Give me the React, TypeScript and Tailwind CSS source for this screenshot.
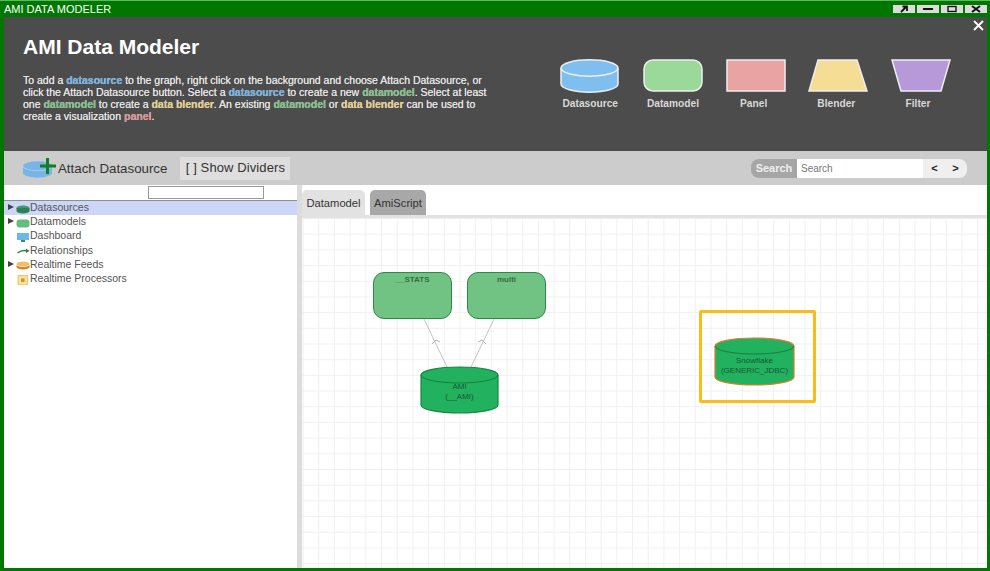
import type { ReactNode } from "react";

function Hl({ color, children }: { color: string; children: ReactNode }) {
  return <span className={`font-bold ${color}`}>{children}</span>;
}

function WinButton({ children }: { children: ReactNode }) {
  return (
    <div className="w-[22px] h-[8px] bg-[#dcdcdc] flex items-center justify-center">
      <svg width="12" height="8" viewBox="0 0 12 8">
        {children}
      </svg>
    </div>
  );
}

function Legend({ label, labelClass, children }: { label: string; labelClass?: string; children: ReactNode }) {
  return (
    <div className="w-[60px] flex flex-col items-center">
      <svg width="60" height="34" viewBox="0 0 60 34">
        {children}
      </svg>
      <span className={`mt-[4px] text-[10.2px] leading-[14px] font-bold text-[#d8d8d8] whitespace-nowrap ${labelClass ?? ""}`}>
        {label}
      </span>
    </div>
  );
}

function Cylinder({
  width,
  height,
  stroke,
  textTop,
  children,
}: {
  width: number;
  height: number;
  stroke: string;
  textTop: number;
  children: ReactNode;
}) {
  const rx = width / 2 - 1;
  const ry = 8;
  return (
    <div className="relative" style={{ width, height }}>
      <svg width={width} height={height} className="absolute inset-0">
        <path
          d={`M1 ${ry + 1} A${rx} ${ry} 0 0 1 ${width - 1} ${ry + 1} V${height - ry - 1} A${rx} ${ry} 0 0 1 1 ${height - ry - 1} Z`}
          fill="#22b15f"
          stroke={stroke}
          strokeWidth="1.2"
        />
        <path d={`M1 ${ry + 1} A${rx} ${ry} 0 0 0 ${width - 1} ${ry + 1}`} fill="none" stroke="#12743a" strokeWidth="0.8" />
      </svg>
      <div className="absolute inset-x-0 text-center text-[8px] leading-[9.5px] text-[#1c5535] whitespace-nowrap" style={{ top: textTop }}>
        {children}
      </div>
    </div>
  );
}

function TreeRow({
  label,
  arrow,
  active,
  children,
}: {
  label: string;
  arrow?: boolean;
  active?: boolean;
  children: ReactNode;
}) {
  return (
    <div className={`h-[14.2px] flex items-center pl-[4px] ${active ? "bg-[#ccd6f6]" : ""}`}>
      <span className="w-[8px] h-[8px] flex items-start">
        {arrow && (
          <svg width="6" height="6" viewBox="0 0 6 6">
            <path d="M0 0 L6 3 L0 6 Z" fill="#444" />
          </svg>
        )}
      </span>
      <svg width="14" height="10" viewBox="0 0 14 10" className="mt-[1px] shrink-0">
        {children}
      </svg>
      <span className="text-[10.5px] leading-[13px] mb-[1px] text-[#555] whitespace-nowrap">{label}</span>
    </div>
  );
}

export default function App() {
  return (
    <div className="w-[990px] h-[571px] overflow-hidden bg-[#007700] font-['Liberation_Sans',Arial,sans-serif] flex flex-col">
      <div className="h-px bg-[#63b563]" />
      {/* title bar */}
      <div className="h-[16px] flex items-center justify-between pl-[4px] pr-[3px]">
        <span className="text-[11px] leading-[16px] text-white">AMI DATA MODELER</span>
        <div className="flex gap-[2px] pb-[1px]">
          <WinButton>
            <path d="M3 7 L8 2 M4.5 1.5 H9 V6" stroke="#111" strokeWidth="1.8" fill="none" />
          </WinButton>
          <WinButton>
            <path d="M1 4 H11" stroke="#111" strokeWidth="2" />
          </WinButton>
          <WinButton>
            <rect x="2" y="1.5" width="8" height="5" stroke="#111" strokeWidth="1.4" fill="none" />
          </WinButton>
          <WinButton>
            <path d="M2 1 L10 7 M10 1 L2 7" stroke="#111" strokeWidth="2" />
          </WinButton>
        </div>
      </div>

      <div className="flex-1 min-h-0 ml-[4px] mr-[3px] mb-[3px] flex flex-col bg-white">
        {/* help banner */}
        <div className="relative h-[134px] shrink-0 bg-[#4c4c4c] flex justify-between pl-[19px] pr-[36px]">
          <div className="w-[480px] pt-[17px]">
            <h1 className="text-[21px] leading-[25px] font-bold text-white">AMI Data Modeler</h1>
            <p className="mt-[15px] text-[10.5px] leading-[12px] text-[#e4e4e4] whitespace-nowrap [text-shadow:0_0_0.5px_#e4e4e4]">
              To add a <Hl color="text-[#6fb0e4]">datasource</Hl> to the graph, right click on the background and choose Attach Datasource, or
              <br />
              click the Attach Datasource button. Select a <Hl color="text-[#6fb0e4]">datasource</Hl> to create a new <Hl color="text-[#7fbf85]">datamodel</Hl>. Select at least
              <br />
              one <Hl color="text-[#7fbf85]">datamodel</Hl> to create a <Hl color="text-[#e3cd87]">data blender</Hl>. An existing <Hl color="text-[#7fbf85]">datamodel</Hl> or <Hl color="text-[#e3cd87]">data blender</Hl> can be used to
              <br />
              create a visualization <Hl color="text-[#d98f8f]">panel</Hl>.
            </p>
          </div>
          <div className="flex gap-[22.7px] pt-[42px]">
            <Legend label="Datasource">
              <path d="M1 9 A28 8 0 0 1 58 9 V25 A28 8 0 0 1 1 25 Z" fill="#7fbff0" stroke="#eee" strokeWidth="1.5" />
              <path d="M1 9 A28 8 0 0 0 58 9" fill="none" stroke="#eee" strokeWidth="1.5" />
            </Legend>
            <Legend label="Datamodel">
              <rect x="1" y="1" width="58" height="31" rx="9" fill="#9bd99b" stroke="#eee" strokeWidth="1.5" />
            </Legend>
            <Legend label="Panel" labelClass="mr-[4px]">
              <rect x="1" y="1" width="58" height="31" fill="#e9a3a3" stroke="#eee" strokeWidth="1.5" />
            </Legend>
            <Legend label="Blender" labelClass="mr-[4px]">
              <path d="M10 1 H49 L59 32 H1 Z" fill="#f6dd95" stroke="#eee" strokeWidth="1.5" />
            </Legend>
            <Legend label="Filter" labelClass="mr-[6px]">
              <path d="M1 1 H59 L50 32 H10 Z" fill="#b799d9" stroke="#eee" strokeWidth="1.5" />
            </Legend>
          </div>
          <svg width="11" height="11" viewBox="0 0 11 11" className="absolute right-[3px] top-[3px]">
            <path d="M1 1 L10 10 M10 1 L1 10" stroke="#fff" strokeWidth="1.8" />
          </svg>
        </div>

        {/* toolbar */}
        <div className="h-[34px] shrink-0 bg-[#cccccc] flex items-center pl-[19px] pr-[20px]">
          <svg width="35" height="21" viewBox="0 0 35 21" className="shrink-0 mb-[1px]">
            <path d="M0 9 A14 4.5 0 0 1 29 9 V16 A14 4.5 0 0 1 0 16 Z" fill="#78b4e6" />
            <path d="M0 9 A14 4.5 0 0 0 29 9" fill="none" stroke="#a4cdef" strokeWidth="1" />
            <path d="M24.5 1 V17 M17 9 H33" stroke="#0f7f1f" strokeWidth="3" />
          </svg>
          <span className="text-[13.3px] leading-[16px] mt-px text-[#333] whitespace-nowrap">Attach Datasource</span>
          <div className="ml-[13px] h-[23px] w-[110px] bg-[#dedede] flex items-center justify-center text-[13px] text-[#333] whitespace-nowrap tracking-[0.1px]">
            [ ] Show Dividers
          </div>
          <div className="ml-auto flex items-center h-[19px]">
            <div className="w-[46px] h-full rounded-l-[8px] bg-[#a6a6a6] flex items-center justify-center text-[11px] font-bold text-[#eeeeee]">
              Search
            </div>
            <div className="w-[126px] h-full bg-white flex items-center pl-[4px] text-[10px] text-[#777]">Search</div>
            <div className="w-[44px] h-full rounded-r-[8px] bg-[#efefef] flex items-center justify-around px-[1px] text-[11px] font-bold text-[#222]">
              <span>&lt;</span>
              <span>&gt;</span>
            </div>
          </div>
        </div>

        <div className="flex-1 min-h-0 flex">
          {/* tree */}
          <div className="w-[293px] shrink-0 flex flex-col">
            <div className="h-[15px] shrink-0 pl-[144px] pt-px">
              <div className="w-[116px] h-[13px] border border-[#999] bg-white" />
            </div>
            <div className="h-[1px] bg-[#8f8f8f]" />
            <TreeRow label="Datasources" arrow active>
              <ellipse cx="7" cy="4" rx="6.5" ry="2.5" fill="#3f9b6d" />
              <path d="M0.5 4 V7 A6.5 2.5 0 0 0 13.5 7 V4 Z" fill="#2d7f56" />
            </TreeRow>
            <TreeRow label="Datamodels" arrow>
              <rect x="0.5" y="1.5" width="13" height="8" rx="3" fill="#63bd7e" />
            </TreeRow>
            <TreeRow label="Dashboard">
              <rect x="1" y="1" width="12" height="7" fill="#6cb9e6" />
              <rect x="5" y="8" width="4" height="2" fill="#3a7fb0" />
            </TreeRow>
            <TreeRow label="Relationships">
              <path d="M1.5 7 Q6 3.5 12 5" stroke="#2f7f52" strokeWidth="1.4" fill="none" />
              <path d="M10 2.5 L13.5 5 L10 7 Z" fill="#2f7f52" />
            </TreeRow>
            <TreeRow label="Realtime Feeds" arrow>
              <ellipse cx="7" cy="4" rx="6.5" ry="2.5" fill="#f0c060" />
              <path d="M0.5 4.5 A6.5 2.5 0 0 0 13.5 4.5 V7 A6.5 2.5 0 0 1 0.5 7 Z" fill="#e07f30" />
            </TreeRow>
            <TreeRow label="Realtime Processors">
              <rect x="2" y="0.5" width="9.5" height="9.5" fill="#fbe39a" stroke="#e0b860" strokeWidth="0.8" />
              <rect x="5" y="3.5" width="3.5" height="3.5" fill="#e58a20" />
            </TreeRow>
          </div>

          {/* divider */}
          <div className="w-[5px] shrink-0 bg-[#dcdcdc]" />

          {/* graph side */}
          <div className="flex-1 min-w-0 flex flex-col">
            <div className="h-[30px] shrink-0 flex items-end gap-[5px] text-[11.2px] text-[#333]">
              <div className="w-[63px] h-[25px] pt-[2px] rounded-t-[5px] bg-[#e2e2e2] flex items-center justify-center">Datamodel</div>
              <div className="w-[56px] h-[25px] pt-[2px] rounded-t-[5px] bg-[#a8a8a8] flex items-center justify-center">AmiScript</div>
            </div>
            <div className="h-[3px] shrink-0 bg-[#e2e2e2]" />
            <div className="relative flex-1 min-h-0 bg-white bg-[linear-gradient(to_right,#f0f0f0_1px,transparent_1px),linear-gradient(to_bottom,#f0f0f0_1px,transparent_1px)] bg-[size:15.7px_15.7px] bg-[position:0.6px_0px] overflow-hidden">
              <svg className="absolute inset-0 w-full h-full">
                <path d="M122 101 L145 149 M192 101 L169 149" stroke="#c4c4c4" strokeWidth="1" fill="none" />
                <path d="M130 126 L134 122 L138 124 M176 124 L180 122 L184 126" stroke="#b4b4b4" strokeWidth="1" fill="none" />
              </svg>
              <div className="absolute left-[71px] top-[54px] w-[79px] h-[47px] rounded-[11px] bg-[#70c382] border border-[#2c8a45] pt-[2px] text-center text-[8px] leading-[10px] font-bold text-[#3b6a48]">
                __STATS
              </div>
              <div className="absolute left-[165px] top-[54px] w-[79px] h-[47px] rounded-[11px] bg-[#70c382] border border-[#2c8a45] pt-[2px] text-center text-[8px] leading-[10px] font-bold text-[#3b6a48]">
                multi
              </div>
              <div className="absolute left-[118px] top-[148px]">
                <Cylinder width={79} height={48} stroke="#13893f" textTop={16}>
                  AMI
                  <br />
                  (__AMI)
                </Cylinder>
              </div>
              <div className="absolute left-[397px] top-[92px] w-[117px] h-[93px] rounded-[2px] border-[3px] border-[#fbbc17]" />
              <div className="absolute left-[412px] top-[119px]">
                <Cylinder width={81} height={49} stroke="#e07a2c" textTop={19}>
                  Snowflake
                  <br />
                  (GENERIC_JDBC)
                </Cylinder>
              </div>
            </div>
          </div>
        </div>
      </div>
    </div>
  );
}
